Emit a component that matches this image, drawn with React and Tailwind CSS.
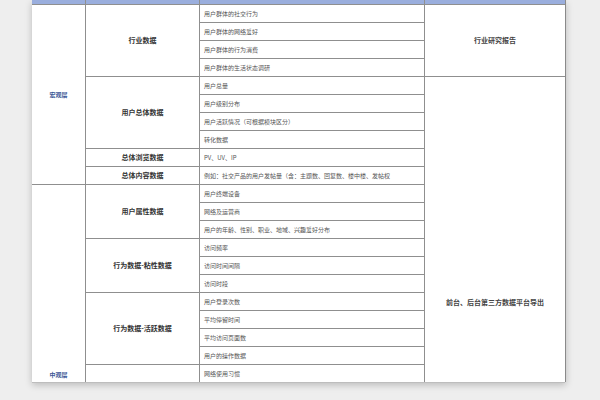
import React from "react";

const C3 = ({ children }) => (
  <div className="bg-white flex items-center pl-[4px] overflow-hidden whitespace-nowrap text-[6px] text-[#555]">
    {children}
  </div>
);
const C2 = ({ children, cls = "" }) => (
  <div className={"bg-white flex items-center justify-center text-[7px] font-bold text-[#333] " + cls}>
    {children}
  </div>
);

export default function App() {
  return (
    <div
      className="w-[600px] h-[400px] bg-[#eeeeee] overflow-hidden flex"
      style={{ fontFamily: '"Noto Sans CJK SC", "Noto Sans", sans-serif' }}
    >
      <div className="ml-[32px] w-[534px] h-[382px] bg-white shadow-[0_3px_7px_rgba(0,0,0,0.22)] border-r border-[#8a8a8a]">
        <div className="grid grid-cols-[53px_113px_224px_140px] grid-rows-[4px_repeat(21,17px)] gap-px bg-[#8f8f8f] border-b border-[#bdbdbd]">
          <div className="bg-[#9aaedd]" />
          <div className="bg-[#9aaedd]" />
          <div className="bg-[#9aaedd]" />
          <div className="bg-[#9aaedd]" />

          <div className="row-span-10 bg-white flex items-center justify-center text-[6px] font-bold text-[#3b5896]">
            宏观层
          </div>
          <C2 cls="row-span-4">行业数据</C2>
          <C3>用户群体的社交行为</C3>
          <div className="row-span-4 bg-white flex items-center justify-center text-[7px] font-semibold text-[#444]">
            行业研究报告
          </div>
          <C3>用户群体的网络爱好</C3>
          <C3>用户群体的行为消费</C3>
          <C3>用户群体的生活状态调研</C3>

          <C2 cls="row-span-4">用户总体数据</C2>
          <C3>用户总量</C3>
          <div className="row-span-17 bg-white flex justify-center pt-[220px] text-[7px] font-semibold text-[#444]">
            前台、后台第三方数据平台导出
          </div>
          <C3>用户级别分布</C3>
          <C3>用户活跃情况（可根据模块区分）</C3>
          <C3>转化数据</C3>

          <C2>总体浏览数据</C2>
          <C3>PV、UV、IP</C3>
          <C2>总体内容数据</C2>
          <C3>例如：社交产品的用户发帖量（含：主题数、回复数、楼中楼、发帖权</C3>

          <div className="row-span-11 bg-white flex items-end justify-center pb-[3px] text-[6px] font-bold text-[#3b5896]">
            中观层
          </div>
          <C2 cls="row-span-3">用户属性数据</C2>
          <C3>用户终端设备</C3>
          <C3>网络及运营商</C3>
          <C3>用户的年龄、性别、职业、地域、兴趣爱好分布</C3>

          <C2 cls="row-span-3">行为数据-粘性数据</C2>
          <C3>访问频率</C3>
          <C3>访问时间间隔</C3>
          <C3>访问时段</C3>

          <C2 cls="row-span-4">行为数据-活跃数据</C2>
          <C3>用户登录次数</C3>
          <C3>平均停留时间</C3>
          <C3>平均访问页面数</C3>
          <C3>用户的操作数据</C3>

          <div className="bg-white" />
          <C3>网络使用习惯</C3>
        </div>
      </div>
    </div>
  );
}
